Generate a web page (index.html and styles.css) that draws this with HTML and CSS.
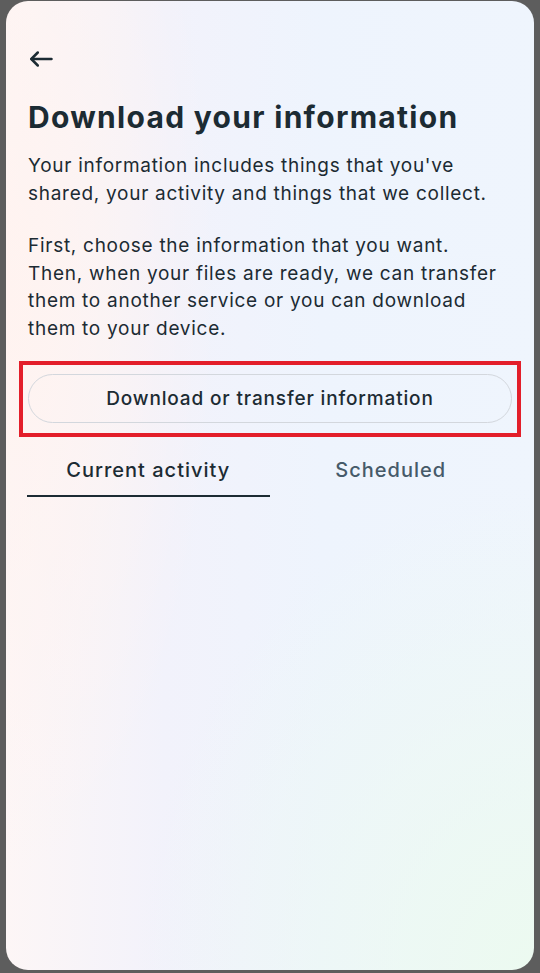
FILE: index.html
```html
<!DOCTYPE html>
<html lang="en">
<head>
<meta charset="utf-8">
<title>Download your information</title>
<link rel="stylesheet" href="styles.css">
</head>
<body>
<main class="card">
  <header class="topbar">
    <button class="back" aria-label="Back">
      <svg width="24" height="24" viewBox="0 0 24 24" fill="none" stroke="#1c2b33" stroke-width="2.5" stroke-linecap="round" stroke-linejoin="round">
        <path d="M22.5 12H2.5"/>
        <path d="M8.8 5.5L2.3 12l6.5 6.5"/>
      </svg>
    </button>
  </header>
  <section class="content">
    <h1 class="title">Download your information</h1>
    <p class="desc">Your information includes things that you've shared, your activity and things that we collect.</p>
    <p class="desc">First, choose the information that you want. Then, when your files are ready, we can transfer them to another service or you can download them to your device.</p>
    <div class="action highlighted">
      <button class="pill">Download or transfer information</button>
    </div>
    <nav class="tabs">
      <div class="tab active">Current activity</div>
      <div class="tab">Scheduled</div>
    </nav>
  </section>
</main>
</body>
</html>
```
FILE: styles.css
```css
* { box-sizing: border-box; }
html, body { margin: 0; padding: 0; }
body {
  background: #5d5d5d;
  width: 540px;
  height: 973px;
  overflow: hidden;
  font-family: Inter, "Noto Sans", sans-serif;
  color: #1c2b33;
}
.card {
  margin: 1px 6px 0 6px;
  height: 969px;
  border-radius: 22px;
  background:
    radial-gradient(ellipse 75% 50% at 100% 100%, rgba(236, 250, 240, 1) 0%, rgba(236, 250, 240, 0) 100%),
    radial-gradient(ellipse 40% 60% at 0% 30%, rgba(255, 243, 240, 1) 0%, rgba(255, 243, 240, 0) 100%),
    linear-gradient(90deg, #fdf6f6 0%, #f2f2fb 30%, #eef4fd 60%, #eff5fd 100%);
  overflow: hidden;
}
.topbar {
  padding: 46px 0 0 23px;
  height: 96px;
}
.back {
  border: 0;
  background: none;
  padding: 0;
  width: 24px;
  height: 24px;
  display: block;
}
.back svg { display: block; }
.content {
  padding: 0 22px 0 22px;
}
.title {
  margin: 0;
  font-size: 30px;
  font-weight: 700;
  line-height: 40px;
  letter-spacing: 1.3px;
}
.desc {
  margin: 15px 0 0 0;
  max-width: 472px;
  font-size: 19px;
  line-height: 27.5px;
  font-weight: 400;
  letter-spacing: 0.72px;
}
.desc + .desc { margin-top: 25px; }
.action {
  margin-top: 32px;
  position: relative;
}
.highlighted::before {
  content: "";
  position: absolute;
  left: -9px;
  right: -9px;
  top: -13px;
  bottom: -14px;
  border: 4px solid #e31e2a;
  pointer-events: none;
}
.pill {
  display: block;
  width: 100%;
  height: 49px;
  border: 1.5px solid #d3d7dd;
  border-radius: 25px;
  background: transparent;
  font-family: inherit;
  font-size: 19px;
  font-weight: 500;
  letter-spacing: 0.85px;
  color: #1c2b33;
}
.tabs {
  margin-top: 24px;
  display: grid;
  grid-template-columns: 1fr 1fr;
  width: 485px;
  margin-left: -1px;
}
.tab {
  text-align: center;
  font-size: 20px;
  font-weight: 500;
  line-height: 24px;
  padding: 11px 0 13px;
  color: #465a69;
  letter-spacing: 1px;
  border-bottom: 2px solid transparent;
}
.tab.active {
  color: #1c2b33;
  border-bottom-color: #1c2b33;
}
```
